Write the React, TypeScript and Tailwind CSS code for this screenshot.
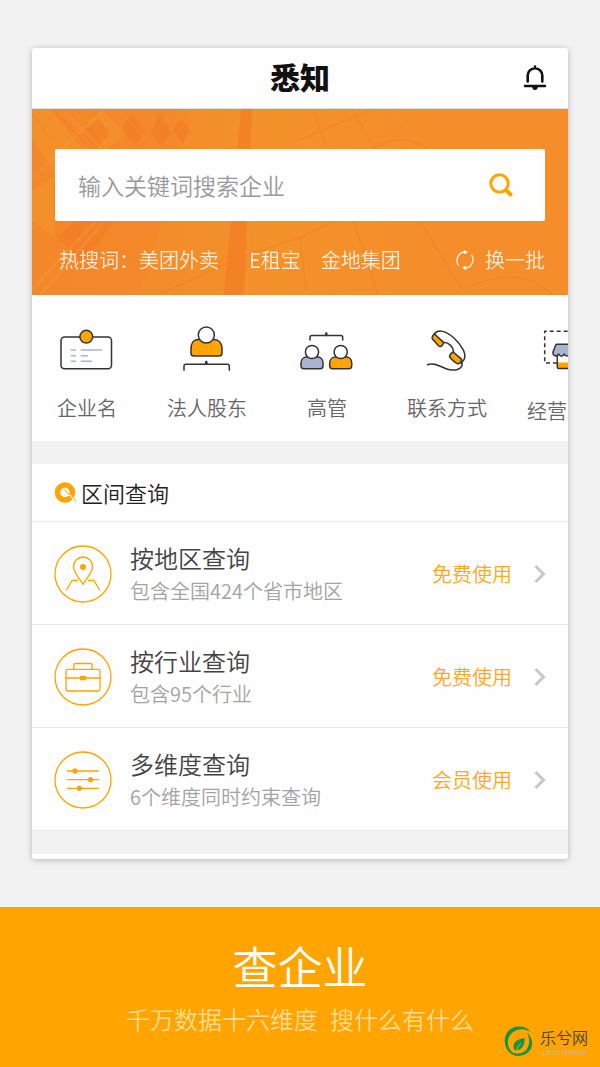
import type { ReactNode } from "react";

const INK = "#333333";
const ORANGE = "#ffa400";
const SLATE = "#a9b4d0";

function CategoryArt({ tall = false, children }: { tall?: boolean; children: ReactNode }) {
  return (
    <svg
      viewBox={tall ? "0 0 80 51" : "0 0 80 48"}
      className={tall ? "h-[51px] w-20" : "h-12 w-20"}
      fill="none"
      stroke={INK}
      strokeWidth="1.5"
      strokeLinecap="round"
      strokeLinejoin="round"
      aria-hidden="true"
    >
      {children}
    </svg>
  );
}

const categories: { label: string; art: ReactNode }[] = [
  {
    label: "企业名",
    art: (
      <CategoryArt>
        <rect x="14" y="12" width="50.5" height="31.7" rx="3.5" />
        <circle cx="39.3" cy="11.7" r="6.4" fill={ORANGE} />
        <path
          stroke={SLATE}
          strokeLinecap="butt"
          d="M23.7 25H29M33.7 25H55M23.7 30.7H29M33.7 30.7H41M23.7 36.3H29M33.7 36.3H45"
        />
      </CategoryArt>
    ),
  },
  {
    label: "法人股东",
    art: (
      <CategoryArt>
        <path
          fill={ORANGE}
          d="M31.5 14.5h15.6c5 0 7.9 4 7.9 9v4.4c0 2-1.2 3.1-3.1 3.1H27.1c-1.9 0-3.1-1.1-3.1-3.1v-4.4c0-5 2.5-9 7.5-9Z"
        />
        <circle cx="39.3" cy="10" r="8" fill="#fff" />
        <path d="M17 45.3v-4.2c0-1.2.6-1.8 1.8-1.8h41.7c1.2 0 1.8.6 1.8 1.8v4.2" />
        <path strokeWidth="2.6" d="M39.3 37v1.6" />
      </CategoryArt>
    ),
  },
  {
    label: "高管",
    art: (
      <CategoryArt>
        <path d="M23 15v-2.6c0-1.2.6-1.8 1.8-1.8h29.1c1.2 0 1.8.6 1.8 1.8V15" />
        <path strokeWidth="2.4" d="M39.3 8.4V10" />
        <path
          fill={SLATE}
          d="M20 32h10.5c3.500 0 5.500 2.600 5.500 6v3c0 1.800-1 2.700-2.700 2.700H16.700c-1.700 0-2.700-.9-2.700-2.700v-3c0-3.400 2.500-6 6-6Z"
        />
        <path
          fill={ORANGE}
          d="M48.700 32h10.500c3.500 0 5.500 2.600 5.500 6v3c0 1.800-1 2.700-2.700 2.700H45.400c-1.700 0-2.700-.9-2.700-2.700v-3c0-3.400 2.500-6 6-6Z"
        />
        <circle cx="25" cy="27" r="6.6" fill="#fff" />
        <circle cx="53.7" cy="27" r="6.6" fill="#fff" />
      </CategoryArt>
    ),
  },
  {
    label: "联系方式",
    art: (
      <CategoryArt>
        <path d="M27 9.200C31 3.800 39 5.800 47 13c8 7.500 13 16.500 10 21.500l-3 4M36.300 17.700c4.500-1.300 10.800 4.500 10 10" />
        <path
          fill={ORANGE}
          d="m27.800 9.200 8.200 7.700c1 .9.400 2.300-1.300 4-1.300 1-2.300.8-3.200-.1l-6-6.700c-1.300-1.500.8-5 2.300-4.900Z"
        />
        <path
          fill={ORANGE}
          d="m46.500 27.300 7.700 6.600c1.200 1.100-1.500 5.300-3.600 4.800-1.300-.3-5.700-4.200-7.600-6.200-1.600-1.700 2.200-6 3.500-5.200Z"
        />
        <path d="M20.500 39.800c6-2.800 12.500 1.600 18.500 3.900 7.500 2.700 17.500 1.500 16-6" />
      </CategoryArt>
    ),
  },
  {
    label: "经营范围",
    art: (
      <CategoryArt tall>
        <path strokeDasharray="4 3" strokeLinecap="butt" d="M30 38H17.700V6.300H62.300V38H52" />
        <path fill={ORANGE} stroke="none" d="M30.300 37.500h19.400v6H30.300Z" />
        <path d="M30.300 31v11c0 1 .5 1.600 1.500 1.600h16.400c1 0 1.500-.6 1.500-1.600V31" />
        <path
          fill={SLATE}
          d="M29.800 19.300h20.400c.8 0 1.200.4 1.500 1l2.600 6.700c.8 4-4.300 5.200-5.800 2-1.400 3-4.600 3-5.700 0-1.200 2.600-4.400 2.600-5.600 0-1.100 3-4.300 3-5.700 0-1.500 3.200-6.300 2-5.500-2l2.600-6.700c.3-.6.600-1 1.200-1Z"
        />
      </CategoryArt>
    ),
  },
];

function RoundArt({ children }: { children: ReactNode }) {
  return (
    <svg
      viewBox="0 0 58 58"
      className="size-[58px] shrink-0"
      fill="none"
      stroke={ORANGE}
      strokeWidth="1.3"
      strokeLinecap="round"
      strokeLinejoin="round"
      aria-hidden="true"
    >
      <circle cx="29" cy="29" r="28" />
      {children}
    </svg>
  );
}

const queries: { title: string; note: string; plan: string; art: ReactNode }[] = [
  {
    title: "按地区查询",
    note: "包含全国424个省市地区",
    plan: "免费使用",
    art: (
      <RoundArt>
        <path d="M29 39.500c-2.500-5-9.500-11.500-9.500-18a9.500 9.500 0 0 1 19 0c0 6.500-7 13-9.500 18Z" />
        <circle cx="29" cy="22" r="2.300" fill={ORANGE} />
        <path d="M23.500 35.500H18L12.500 45M34.500 35.500H40L45.500 45" />
      </RoundArt>
    ),
  },
  {
    title: "按行业查询",
    note: "包含95个行业",
    plan: "免费使用",
    art: (
      <RoundArt>
        <rect x="12" y="21.300" width="34" height="21.700" rx="1.800" />
        <path d="M19.800 21v-4c0-.9.600-1.500 1.500-1.500h15.400c.9 0 1.500.6 1.500 1.500v4M12 30h34" />
        <rect x="26.700" y="28.300" width="4.600" height="3.400" fill={ORANGE} />
      </RoundArt>
    ),
  },
  {
    title: "多维度查询",
    note: "6个维度同时约束查询",
    plan: "会员使用",
    art: (
      <RoundArt>
        <path d="M13.500 20h31M13.500 28.700h31M13.500 37.300h31" />
        <g fill={ORANGE} strokeWidth="1">
          <circle cx="21" cy="20" r="2.300" />
          <circle cx="36.700" cy="28.700" r="2.300" />
          <circle cx="25.300" cy="37.300" r="2.300" />
        </g>
      </RoundArt>
    ),
  },
];

function BannerBackdrop() {
  return (
    <svg
      viewBox="0 0 536 186"
      preserveAspectRatio="none"
      className="absolute inset-0 size-full"
      fill="none"
      aria-hidden="true"
    >
      <defs>
        <linearGradient id="glow" x1="0" y1="0" x2="1" y2="0">
          <stop offset="0" stopColor="#f4872a" />
          <stop offset="0.250" stopColor="#f4882a" />
          <stop offset="0.450" stopColor="#f4922a" />
          <stop offset="0.700" stopColor="#f48e2a" />
          <stop offset="1" stopColor="#f48d2a" />
        </linearGradient>
      </defs>
      <path fill="url(#glow)" d="M0 0h536v186H0Z" />
      <g fill="#f4932b" opacity=".8">
        <path d="M0 0h18l32 40-26 26L0 30ZM55 12l16-10 22 22-20 18ZM0 82l22-14v60L0 112Z" />
        <path d="M130 112h65l-8 74h-80Z" opacity=".5" />
        <path d="M160 0h49l-4 40h-55Z" opacity=".5" />
      </g>
      <g fill="#f47b27" opacity=".5">
        <path d="m52 22 14-12 12 14-13 15-15-13ZM92 14l9-9 12 18-10 14-12-15ZM124 12l4-6 12 17-11 14-10-12ZM150 10l8 12-8 13-9-14Z" />
        <path d="M209 0h11l-8 186h-20ZM24 128l20-16h38l-30 42Z" />
      </g>
      <g stroke="#f6a13c" opacity=".3">
        <path strokeWidth="3" d="M0 70 72 0M0 180 64 112M30 0 90 60M8 186 104 76" />
        <path d="M60 0l36 40M85 0l40 40M132 40 165 0M215 186l8-186M360 0l32 40M462 112l54 66" />
      </g>
      <g stroke="#f27a22" opacity=".38">
        <path strokeWidth="1.500" d="m0 4 20 28M20 0l40 40M60 0l14 22M268 31 340 0M281 0l14 40M320 0l23 40M130 184l80-36 58-20 44-20M268 128l7 58M320 108l26 78M386 108l44 73M430 180q60-26 90 6M340 40q30-18 56 0" />
      </g>
    </svg>
  );
}

export default function App() {
  return (
    <div className="flex min-h-screen flex-col bg-[#f2f2f2] font-['Noto_Sans_CJK_SC',sans-serif] font-[350]">
      <main className="mx-8 my-12 overflow-hidden rounded-[3px] bg-[#fefefe] shadow-[0_1px_6px_rgba(0,0,0,0.25)]">
        <header className="grid h-[61px] grid-cols-[1fr_auto_1fr] items-center border-b border-[#dedede] px-5">
          <h1 className="col-start-2 pb-1 text-[30px] leading-9 font-black text-[#111]">悉知</h1>
          <button type="button" aria-label="通知" className="justify-self-end">
            <svg viewBox="0 0 26 28" className="h-7 w-[26px]" fill="none" stroke="#111" strokeWidth="2.600" strokeLinecap="round" aria-hidden="true">
              <path d="M5.700 17.500V11.500a7.300 7.300 0 0 1 14.600 0v6M13 2.500v1.500M3 22h20" />
              <path d="M10 22.500h6c-.3 2.400-1.300 3.500-3 3.500s-2.700-1.100-3-3.500Z" fill="#111" stroke="none" />
            </svg>
          </button>
        </header>

        <section className="relative">
          <BannerBackdrop />
          <div className="relative px-[23px] pt-10">
            <form className="flex h-[72px] items-center rounded-[2px] bg-[#fefefe] pr-8 pl-[23px]">
              <input
                type="search"
                aria-label="搜索企业"
                placeholder="输入关键词搜索企业"
                className="h-full min-w-0 flex-1 bg-transparent text-[23px] outline-none placeholder:text-[#999]"
              />
              <button type="button" aria-label="搜索">
                <svg viewBox="0 0 24 24" className="size-6" fill="none" stroke={ORANGE} strokeLinecap="round" aria-hidden="true">
                  <circle cx="10.500" cy="10.500" r="8.700" strokeWidth="3" />
                  <path d="m17.500 17.500 4 4" strokeWidth="4" />
                </svg>
              </button>
            </form>
            <div className="flex h-[74px] items-center pt-1 pl-1 text-xl text-[#ffebd6]">
              <span>热搜词：</span>
              <a href="#meituan">美团外卖</a>
              <a href="#ezubao" className="ml-[30px]">E租宝</a>
              <a href="#jindi" className="ml-5">金地集团</a>
              <button type="button" className="ml-auto flex items-center gap-2.5">
                <svg viewBox="0 0 20 20" className="size-5" fill="none" stroke="#fff1e0" strokeWidth="1.300" strokeLinecap="round" strokeLinejoin="round" aria-hidden="true">
                  <path d="M3.300 15A8 8 0 0 1 2.800 7 8 8 0 0 1 10.500 2M16.700 5A8 8 0 0 1 17.200 13 8 8 0 0 1 9.500 18" />
                  <path fill="#fff1e0" d="M9.500.7 12 2.200 9.500 3.500ZM10.500 16.500 8 17.800l2.500 1.500Z" />
                </svg>
                换一批
              </button>
            </div>
          </div>
        </section>

        <nav className="flex h-[146px] gap-10 overflow-hidden pt-[30px] pl-[15px]">
          {categories.map((c) => (
            <a key={c.label} href="#category" className="flex w-20 shrink-0 flex-col items-center gap-[21px] text-xl text-[#666] whitespace-nowrap">
              {c.art}
              {c.label}
            </a>
          ))}
        </nav>

        <section className="border-y-[23px] border-[#f2f2f2]">
          <h2 className="flex h-[58px] items-center gap-1 border-b border-[#ececec] pl-[23px] text-[22px] font-[350] text-[#222]">
            <svg viewBox="0 0 22 22" className="size-[22px]" fill="none" aria-hidden="true">
              <circle cx="10" cy="10.500" r="7.500" stroke={ORANGE} strokeWidth="5.500" />
              <circle cx="9.700" cy="10.500" r="4" fill="#fff" />
              <path d="m8 7.500 5 5 3 1.200 5 6.500" stroke="#fff" strokeWidth="1.800" />
              <path d="m9.500 7 3 4.500c2 .2 4 1.500 5 2.700l3.500 5" stroke={ORANGE} strokeWidth=".9" />
            </svg>
            区间查询
          </h2>
          <ul>
            {queries.map((q) => (
              <li key={q.title} className="border-b border-[#e8e8e8]">
                <a href="#query" className="flex h-[102px] items-center px-[22px] pt-0.5">
                  {q.art}
                  <div className="ml-[18px] flex-1 pb-0.5">
                    <h3 className="text-2xl leading-9 font-[350] text-[#444]">{q.title}</h3>
                    <p className="text-xl leading-[30px] text-[#a3a3a3]">{q.note}</p>
                  </div>
                  <span className="text-xl text-[#ffa726]">{q.plan}</span>
                  <svg viewBox="0 0 12 20" className="ml-[22px] h-5 w-3" fill="none" stroke="#c7c7cc" strokeWidth="3" aria-hidden="true">
                    <path d="m1.500 2 8 8-8 8" />
                  </svg>
                </a>
              </li>
            ))}
          </ul>
        </section>
        <div className="h-[5px]" />
      </main>

      <footer className="relative flex-1 bg-[#ffa400] pt-[26px] pb-5 text-center">
        <h2 className="mb-0.5 text-[45px] leading-[66px] font-[350] text-white">查企业</h2>
        <p className="flex justify-center gap-3 text-2xl leading-9 text-[#ffdb94]">
          <span>千万数据十六维度</span>
          <span>搜什么有什么</span>
        </p>
        <div className="absolute right-3 bottom-2.5 flex items-center gap-1.5">
          <svg viewBox="0 0 30 32" className="h-8 w-[30px]" fill="none" aria-hidden="true">
            <path fill="#159447" d="M27 7C19-3 1 1 .700 15.500.600 24 6 30 13 31 6 27 3.500 22 4 16 5 6 17 .500 27 7Z" />
            <path fill="#159447" d="M23 7.500c9 8 6 22-7.500 23.500-4 .3-7-1.500-8-4 6 3 13 1.500 16-4 2.500-5 2-11-.5-15.500Z" />
            <path fill="#159447" d="M20.500 13c-6 1-10.500 3-11 8-.1 2.200.8 4 2.100 5l1.100-.9c5 0 8.300-4.200 7.800-12.100Z" />
            <path stroke={ORANGE} d="M12.500 27c.3-4 2-6.500 4.500-8.500" />
          </svg>
          <div>
            <p className="text-base leading-6 text-[#444]">乐兮网</p>
            <p className="font-['Liberation_Sans',sans-serif] text-[8px] leading-2 whitespace-nowrap text-[#d6b888]">LEXI GAME</p>
          </div>
        </div>
      </footer>
    </div>
  );
}
